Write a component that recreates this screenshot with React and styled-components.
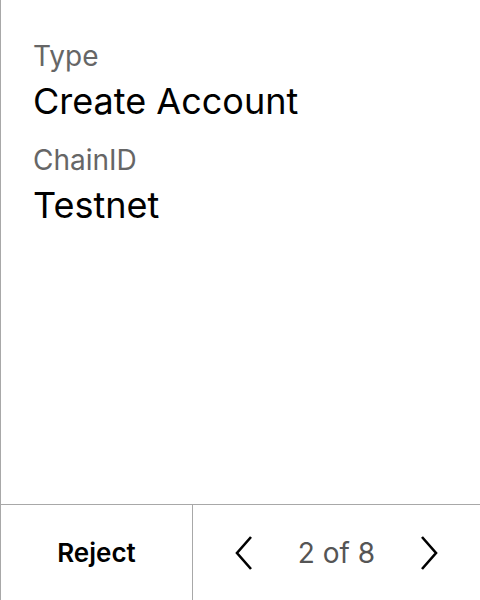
import React from "react";
import styled, { createGlobalStyle } from "styled-components";

const Global = createGlobalStyle`
  html, body { margin: 0; padding: 0; background: #fff; }
  body { font-family: Inter, "Noto Sans", sans-serif; }
  * { box-sizing: border-box; }
`;

const Frame = styled.div`
  width: 480px;
  height: 600px;
  display: flex;
  flex-direction: column;
  border-left: 1px solid #a8a8a8;
`;

const Content = styled.div`
  flex: 1;
  padding: 39px 32px 0 32px;
  display: flex;
  flex-direction: column;
  gap: 20px;
`;

const Field = styled.div`
  display: flex;
  flex-direction: column;
  gap: 6px;
`;

const Label = styled.div`
  font-size: 28px;
  line-height: 34px;
  color: #666;
`;

const Value = styled.div`
  font-size: 36px;
  line-height: 44px;
  color: #000;
`;

const Footer = styled.div`
  height: 96px;
  display: grid;
  grid-template-columns: 192px 1fr;
  border-top: 1px solid #a8a8a8;
`;

const RejectButton = styled.button`
  border: none;
  border-right: 1px solid #a8a8a8;
  background: transparent;
  font-family: inherit;
  font-size: 26px;
  font-weight: 600;
  color: #000;
  padding: 0;
`;

const Pager = styled.div`
  display: flex;
  align-items: center;
  justify-content: center;
  gap: 45px;
`;

const ArrowButton = styled.button`
  border: none;
  background: transparent;
  padding: 0;
  display: flex;
`;

const PageText = styled.span`
  font-size: 28px;
  color: #555;
`;

const Chevron = ({ dir }) => (
  <svg width="18" height="34" viewBox="0 0 18 34">
    <path
      d={dir === "left" ? "M16 1 L2 17 L16 33" : "M2 1 L16 17 L2 33"}
      fill="none"
      stroke="#000"
      strokeWidth="2.6"
    />
  </svg>
);

export default function App() {
  return (
    <>
      <Global />
      <Frame>
        <Content>
          <Field>
            <Label>Type</Label>
            <Value>Create Account</Value>
          </Field>
          <Field>
            <Label>ChainID</Label>
            <Value>Testnet</Value>
          </Field>
        </Content>
        <Footer>
          <RejectButton>Reject</RejectButton>
          <Pager>
            <ArrowButton><Chevron dir="left" /></ArrowButton>
            <PageText>2 of 8</PageText>
            <ArrowButton><Chevron dir="right" /></ArrowButton>
          </Pager>
        </Footer>
      </Frame>
    </>
  );
}
